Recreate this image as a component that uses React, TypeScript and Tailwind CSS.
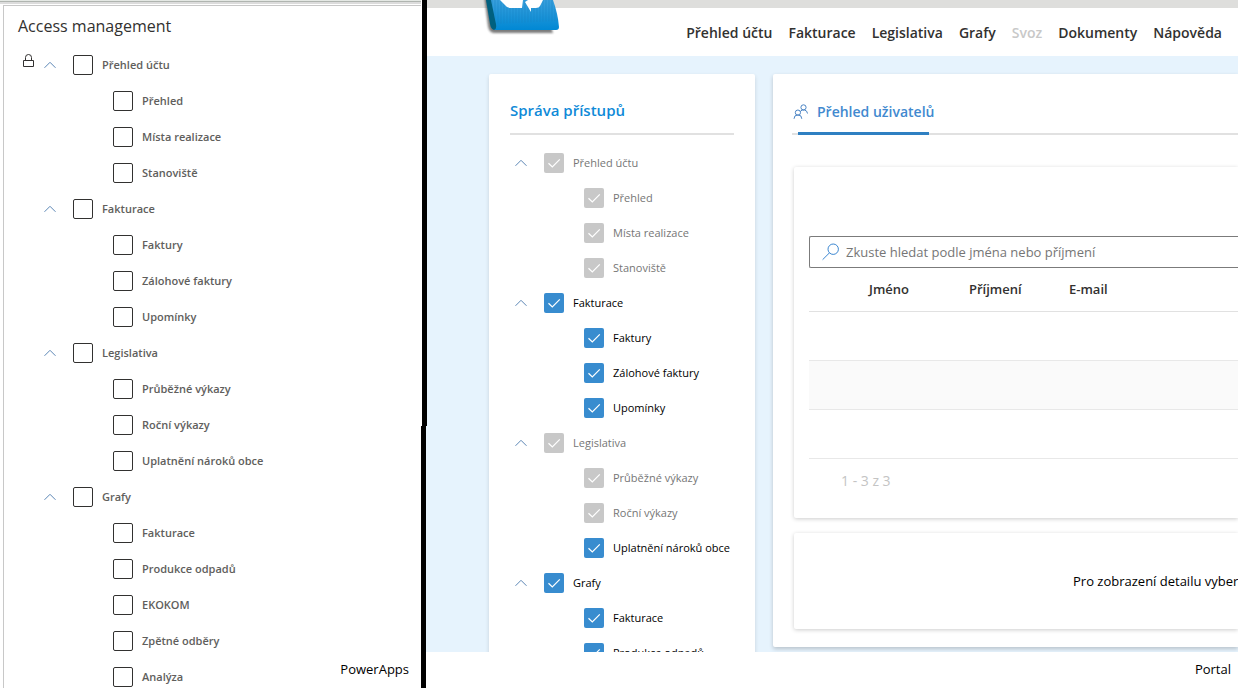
import { useId } from "react";

type Item = { label: string; on?: boolean };
type Group = Item & { children: Item[] };

const managed: Group[] = [
  { label: "Přehled účtu", children: [{ label: "Přehled" }, { label: "Místa realizace" }, { label: "Stanoviště" }] },
  { label: "Fakturace", children: [{ label: "Faktury" }, { label: "Zálohové faktury" }, { label: "Upomínky" }] },
  { label: "Legislativa", children: [{ label: "Průběžné výkazy" }, { label: "Roční výkazy" }, { label: "Uplatnění nároků obce" }] },
  { label: "Grafy", children: [{ label: "Fakturace" }, { label: "Produkce odpadů" }, { label: "EKOKOM" }, { label: "Zpětné odběry" }, { label: "Analýza" }] },
];

const portal: Group[] = [
  { label: "Přehled účtu", children: [{ label: "Přehled" }, { label: "Místa realizace" }, { label: "Stanoviště" }] },
  { label: "Fakturace", on: true, children: [{ label: "Faktury", on: true }, { label: "Zálohové faktury", on: true }, { label: "Upomínky", on: true }] },
  { label: "Legislativa", children: [{ label: "Průběžné výkazy" }, { label: "Roční výkazy" }, { label: "Uplatnění nároků obce", on: true }] },
  { label: "Grafy", on: true, children: [{ label: "Fakturace", on: true }, { label: "Produkce odpadů", on: true }] },
];

function Chevron() {
  return (
    <button type="button" aria-label="Sbalit" className="flex w-3 shrink-0 items-center">
      <svg viewBox="0 0 12 8" className="h-2 w-3" fill="none" stroke="#5b86b5">
        <path d="M0.5 6.8 6 1.3l5.5 5.5" />
      </svg>
    </button>
  );
}

function ManagedRow({ label }: Item) {
  const id = useId();
  return (
    <div className="flex items-center gap-[9px]">
      <input id={id} type="checkbox" className="size-5 shrink-0 appearance-none rounded-xs border border-[#323130] bg-white" />
      <label htmlFor={id} className="text-[11px] leading-4 font-semibold whitespace-nowrap text-[#605e5c]">{label}</label>
    </div>
  );
}

function PortalRow({ label, on }: Item) {
  const id = useId();
  return (
    <div className="flex items-center gap-[9px]">
      <span className="relative flex size-5 shrink-0">
        <input id={id} type="checkbox" defaultChecked disabled={!on} className="size-5 appearance-none rounded-xs bg-[#388ccf] disabled:bg-[#c8c8c8]" />
        <svg viewBox="0 0 20 20" className="pointer-events-none absolute inset-0 size-5" fill="none" stroke="#fff" strokeWidth="1.2">
          <path d="M4.5 10.3 8.3 14 15.8 6.3" />
        </svg>
      </span>
      <label htmlFor={id} className={on ? "text-[11px] leading-4 whitespace-nowrap text-black" : "text-[11px] leading-4 whitespace-nowrap text-[#767676]"}>{label}</label>
    </div>
  );
}

function Logo() {
  return (
    <svg viewBox="0 0 82 40" className="h-10 w-[82px]" role="img" aria-label="Logo">
      <defs>
        <linearGradient id="face" x1="0" y1="0" x2="0" y2="1">
          <stop offset="0" stopColor="#3aa0dc" />
          <stop offset="1" stopColor="#0088d4" />
        </linearGradient>
        <pattern id="ribs" width="3" height="4" patternUnits="userSpaceOnUse">
          <path d="M1 0v4" stroke="#1481c2" strokeWidth="1" opacity=".5" />
        </pattern>
        <filter id="soft" x="-10%" y="-20%" width="120%" height="140%"><feGaussianBlur stdDeviation="1.3" /></filter>
      </defs>
      <path d="M2 -6 6 26q1 7 6 7h59l-4-12L20-6z" fill="#444" opacity=".7" filter="url(#soft)" />
      <path d="M4 0 8 24q1 6 5 6l2-2L11 0z" fill="#00607f" />
      <path d="M9 0h62q5 14 6 27 0 3-3 3H12q3-1 2-6z" fill="url(#face)" />
      <path d="M9 0h62l5 21-62 3z" fill="url(#ribs)" />
      <path d="M18 0 25 7q2 1 4 1h11l1-8zM43 2 49 12v-4h5q3 0 4-2l3-6H46z" fill="#fff" />
    </svg>
  );
}

function PeopleIcon() {
  return (
    <svg viewBox="0 0 16 16" className="size-4" fill="none" stroke="#4a83c3">
      <circle cx="10.5" cy="3.4" r="2.6" />
      <circle cx="4.9" cy="8.6" r="2.6" />
      <path d="M1 14.8a3.9 3.9 0 0 1 7.8 0M7.2 7.6a4 4 0 0 1 7.3 1.9" />
    </svg>
  );
}

function ManagementPanel() {
  return (
    <section className="flex w-[421px] shrink-0 flex-col">
      <div className="h-1 shrink-0 border-t border-b-2 border-[#e4e8e4] border-b-[#dcdcdc] bg-[#b0b5b0]" />
      <div className="relative mt-px ml-[3px] flex-1 border-t border-l border-[#c8c8c8] pl-[14px]">
        <h1 className="pt-2 text-base leading-6 text-[#323130]">Access management</h1>
        <div className="mt-[9px]">
          {managed.map((group, index) => (
            <div key={group.label}>
              <div className="flex h-9 items-center">
                <span className="flex w-[26px] shrink-0 pl-1">
                  {index === 0 && (
                    <svg viewBox="0 0 12 14" className="mb-2 h-[14px] w-3" fill="none" stroke="#323130">
                      <path d="M1.5 6.5h10v6h-10zM3.5 6.5V3.5a3 3 0 0 1 6 0v3" />
                    </svg>
                  )}
                </span>
                <Chevron />
                <span className="w-[17px] shrink-0" />
                <ManagedRow {...group} />
              </div>
              <div className="pl-[95px]">
                {group.children.map((item) => (
                  <div key={item.label} className="flex h-9 items-center"><ManagedRow {...item} /></div>
                ))}
              </div>
            </div>
          ))}
        </div>
        <p className="absolute right-3 bottom-4 text-[13px] leading-5 text-black">PowerApps</p>
      </div>
    </section>
  );
}

const links = ["Přehled účtu", "Fakturace", "Legislativa", "Grafy", "Svoz", "Dokumenty", "Nápověda"];

function PortalPanel() {
  return (
    <section className="mr-[9px] flex min-w-0 flex-1 flex-col">
      <header className="relative flex h-14 shrink-0 items-center justify-end border-t-8 border-[#dededc] bg-white pt-px pr-4">
        <div className="absolute -top-2 left-[55px]"><Logo /></div>
        <nav className="flex gap-4 text-sm font-semibold whitespace-nowrap text-[#323130]">
          {links.map((link) => (
            <a key={link} href="#" className={link === "Svoz" ? "text-[#c8c8c8]" : ""}>{link}</a>
          ))}
        </nav>
      </header>
      <div className="flex h-[596px] shrink-0 gap-[18px] overflow-hidden bg-[#e6f3fd] pt-[18px] pl-[62px]">
        <aside className="h-[640px] w-[266px] shrink-0 rounded-xs bg-white px-[21px] shadow-[0_2px_4px_#00000022]">
          <h2 className="flex h-[61px] items-center border-b-2 border-[#e1e1e1] pt-[14px] text-[15px] font-semibold text-[#0f8ad8]">Správa přístupů</h2>
          <div className="mt-[10px] pl-[5px]">
            {portal.map((group) => (
              <div key={group.label}>
                <div className="flex h-[35px] items-center">
                  <Chevron />
                  <span className="w-[17px] shrink-0" />
                  <PortalRow {...group} />
                </div>
                <div className="pl-[69px]">
                  {group.children.map((item) => (
                    <div key={item.label} className="flex h-[35px] items-center"><PortalRow {...item} /></div>
                  ))}
                </div>
              </div>
            ))}
          </div>
        </aside>
        <main className="h-[573px] min-w-0 flex-1 overflow-hidden rounded-l-xs bg-white pl-[19px] shadow-[0_2px_4px_#00000033]">
          <div className="flex h-[61px] items-end border-b-2 border-[#e1e1e1]">
            <button type="button" className="relative -mb-[2px] ml-px flex h-[46px] items-center gap-2 text-sm font-semibold text-[#4189cf] after:absolute after:right-[5px] after:bottom-0 after:left-[5px] after:h-[3px] after:bg-[#2f80c2]">
              <PeopleIcon />
              Přehled uživatelů
            </button>
          </div>
          <section className="mt-8 ml-0.5 h-[351px] rounded-l-xs pt-[69px] pl-[15px] shadow-[0_1px_4px_#00000033]">
            <label className="flex h-8 items-center gap-[6px] rounded-l-xs border border-r-0 border-[#7b7b7b] pl-3">
              <svg viewBox="0 0 18 18" className="size-[18px] shrink-0" fill="none" stroke="#3b86d0">
                <circle cx="11.2" cy="6.2" r="5.2" />
                <path d="M7.4 9.9.6 16.7" />
              </svg>
              <input type="search" aria-label="Hledat uživatele" placeholder="Zkuste hledat podle jména nebo příjmení" className="min-w-0 flex-1 pt-px text-[13px] placeholder:text-[#767676]" />
            </label>
            <table className="w-full table-fixed border-collapse text-left text-[13px]">
              <thead>
                <tr className="h-[43px] border-b border-[#e1e1e1] text-[#323130]">
                  <th className="w-[60px]"></th>
                  <th className="w-[100px] font-semibold">Jméno</th>
                  <th className="w-[100px] font-semibold">Příjmení</th>
                  <th className="font-semibold">E-mail</th>
                </tr>
              </thead>
              <tbody>
                <tr className="h-[49px] border-b border-[#e8e8e8]"><td colSpan={4} /></tr>
                <tr className="h-[49px] border-b border-[#e8e8e8] bg-[#fafafa]"><td colSpan={4} /></tr>
                <tr className="h-[49px] border-b border-[#e8e8e8]"><td colSpan={4} /></tr>
              </tbody>
            </table>
            <p className="mt-3 pl-8 text-sm text-[#c4c4c4]">1 - 3 z 3</p>
          </section>
          <section className="mt-[15px] ml-0.5 flex h-24 items-center overflow-hidden rounded-l-xs pt-0.5 pl-[279px] shadow-[0_1px_4px_#00000033]">
            <p className="text-[13px] whitespace-nowrap text-black">Pro zobrazení detailu vyberte uživatele</p>
          </section>
        </main>
      </div>
      <p className="mt-[7px] pr-[7px] text-right text-[13px] leading-5 text-black">Portal</p>
    </section>
  );
}

export default function App() {
  return (
    <div className="flex h-screen overflow-hidden bg-white font-['Open_Sans','Noto_Sans',sans-serif]">
      <ManagementPanel />
      <div className="flex w-[6px] shrink-0 flex-col">
        <div className="ml-px h-[426px] bg-black" />
        <div className="h-[226px] border-l-[5px] border-black bg-[#e6f3fd]" />
        <div className="mr-px flex-1 bg-black" />
      </div>
      <PortalPanel />
    </div>
  );
}
